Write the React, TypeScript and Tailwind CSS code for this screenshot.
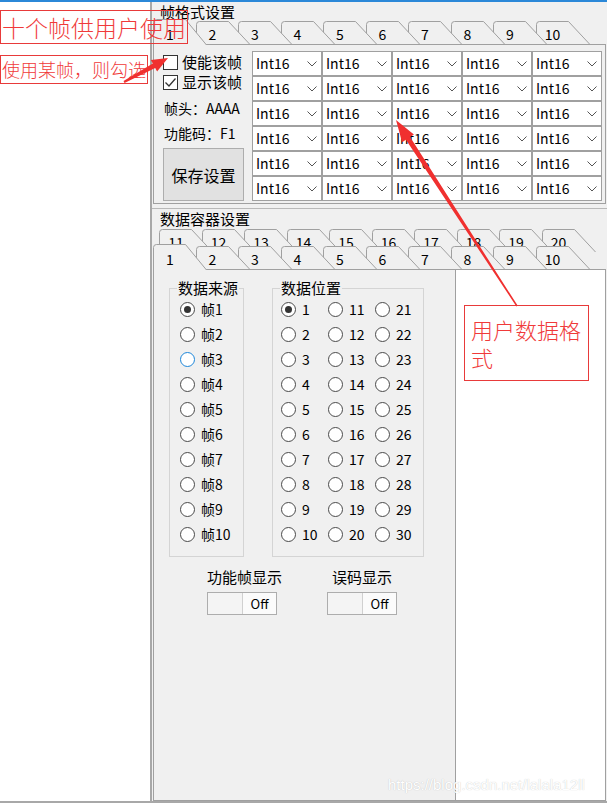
import clsx from 'clsx'

const Z = ['z-[10]', 'z-[9]', 'z-[8]', 'z-[7]', 'z-[6]', 'z-[5]', 'z-[4]', 'z-[3]', 'z-[2]', 'z-[1]']

const front = ['1', '2', '3', '4', '5', '6', '7', '8', '9', '10']
const back = ['11', '12', '13', '14', '15', '16', '17', '18', '19', '20']

function Tab({ label, index, selected }: { label: string; index: number; selected?: boolean }) {
  const h = selected ? 26 : 23
  return (
    <div className={clsx('relative w-[42.5px] shrink-0', selected ? 'h-[26px]' : 'mb-[1px] h-[23px]', Z[index])}>
      <svg className="absolute left-0 top-0 overflow-visible" width="54" height={h}>
        <path d={`M0.5 ${h} V3.5 Q0.5 0.5 3.5 0.5 H32.5 L53.5 ${h}`} fill="#f0f0f0" stroke="#a0a0a0" />
      </svg>
      <span
        className={clsx(
          'absolute left-0 flex w-[34px] justify-center text-[14px] leading-[14px]',
          selected ? 'top-[8px]' : 'top-[6px]'
        )}
      >
        {label}
      </span>
    </div>
  )
}

function Check({ checked }: { checked?: boolean }) {
  return (
    <span className="flex h-[15px] w-[15px] shrink-0 items-center justify-center border border-[#333] bg-white">
      {checked && (
        <svg width="11" height="9">
          <polyline points="0.5,4.5 4,8 10.5,0.5" fill="none" stroke="#333" strokeWidth="1.3" />
        </svg>
      )}
    </span>
  )
}

function Radio({ checked, hover }: { checked?: boolean; hover?: boolean }) {
  return (
    <span
      className={clsx(
        'flex h-[15px] w-[15px] shrink-0 items-center justify-center rounded-full border-[1.5px] bg-white',
        hover ? 'border-[#1c86d9]' : 'border-[#4a4a4a]'
      )}
    >
      {checked && <span className="h-[7px] w-[7px] rounded-full bg-[#333]" />}
    </span>
  )
}

function Toggle() {
  return (
    <div className="flex h-[23px] w-[70px] border border-[#adadad] bg-[#f4f4f4]">
      <div className="flex-1" />
      <div className="flex w-[34px] items-center justify-center border-l border-[#d0d0d0] bg-[#fbfbfb] text-[13px]">
        Off
      </div>
    </div>
  )
}

function arrow(x1: number, y1: number, x2: number, y2: number, head: number, headW: number, tailW: number, neckW: number) {
  const dx = x2 - x1
  const dy = y2 - y1
  const L = Math.hypot(dx, dy)
  const ux = dx / L
  const uy = dy / L
  const px = -uy
  const py = ux
  const nx = x2 - ux * head
  const ny = y2 - uy * head
  const pts = [
    [x1 + (px * tailW) / 2, y1 + (py * tailW) / 2],
    [nx + (px * neckW) / 2, ny + (py * neckW) / 2],
    [nx + (px * headW) / 2, ny + (py * headW) / 2],
    [x2, y2],
    [nx - (px * headW) / 2, ny - (py * headW) / 2],
    [nx - (px * neckW) / 2, ny - (py * neckW) / 2],
    [x1 - (px * tailW) / 2, y1 - (py * tailW) / 2],
  ]
  return pts.map((p) => p.map((v) => v.toFixed(1)).join(',')).join(' ')
}

export default function App() {
  return (
    <div className="relative h-[804px] w-[607px] overflow-hidden bg-white font-['Noto_Sans_CJK_SC','Noto_Sans',sans-serif] text-black">
      <div className="h-[2px] bg-[#2b88d8]" />
      <div className="flex h-[799px]">
        <div className="w-[152px] border-r-2 border-[#a8a8a8] bg-white" />
        <div className="flex flex-1 flex-col bg-[#f0f0f0]">
          {/* 帧格式设置 */}
          <div className="h-[19px] pl-[8px] text-[15px] leading-[19px]">帧格式设置</div>
          <div className="relative z-10 mb-[-1px] flex h-[24px] items-end pl-[1px]">
            {front.map((l, i) => (
              <Tab key={l} label={l} index={i} selected={i === 0} />
            ))}
          </div>
          <div className="mx-[1px] flex h-[160px] border border-[#a0a0a0] pl-[9px] pt-[6px]">
            <div className="w-[89px] text-[15px]">
              <div className="mt-[1px] flex h-[20px] items-center gap-[4px]">
                <Check />
                <span>使能该帧</span>
              </div>
              <div className="flex h-[20px] items-center gap-[4px]">
                <Check checked />
                <span>显示该帧</span>
              </div>
              <div className="mt-[6px] flex h-[20px] items-center pl-[1px] text-[14px]">帧头：AAAA</div>
              <div className="mt-[5px] flex h-[20px] items-center pl-[1px] text-[14px]">功能码：F1</div>
              <button className="mt-[5px] flex h-[53px] w-[81px] items-center justify-center border border-[#adadad] bg-[#e1e1e1] text-[16px]">
                保存设置
              </button>
            </div>
            <div className="grid h-fit grid-cols-[repeat(5,68px)] grid-rows-[repeat(6,23px)] gap-[2px] bg-[#a0a0a0] p-[1px]">
              {Array.from({ length: 30 }).map((_, i) => (
                <div key={i} className="flex items-center justify-between bg-white pl-[3px] pr-[4px] text-[14px]">
                  <span>Int16</span>
                  <svg width="10" height="6">
                    <polyline points="0.5,0.5 5,5 9.5,0.5" fill="none" stroke="#555" />
                  </svg>
                </div>
              ))}
            </div>
          </div>

          {/* 数据容器设置 */}
          <div className="mt-[4px] h-[1px] bg-[#b9b9b9]" />
          <div className="h-[20px] pl-[8px] text-[15px] leading-[20px]">数据容器设置</div>
          <div className="relative z-[5] flex h-[17px] items-start pl-[7px]">
            {back.map((l, i) => (
              <Tab key={l} label={l} index={i} />
            ))}
          </div>
          <div className="relative z-10 mb-[-1px] flex h-[24px] items-end pl-[1px]">
            {front.map((l, i) => (
              <Tab key={l} label={l} index={i} selected={i === 0} />
            ))}
          </div>
          <div className="mx-[1px] flex flex-1 border border-[#a0a0a0]">
            <div className="flex-1 pt-[9px]">
              <div className="flex items-start text-[14px]">
                <fieldset className="ml-[15px] w-[75px] border border-[#d4d4d4] pb-[9px] pl-[10px]">
                  <legend className="ml-[-3px] px-[1px] text-[15px] leading-[18px]">数据来源</legend>
                  {front.map((l, i) => (
                    <div key={l} className="flex h-[25px] items-center gap-[6px]">
                      <Radio checked={i === 0} hover={i === 2} />
                      <span>帧{l}</span>
                    </div>
                  ))}
                </fieldset>
                <fieldset className="ml-[28px] w-[152px] border border-[#d4d4d4] pb-[9px] pl-[8px]">
                  <legend className="ml-[-1px] px-[1px] text-[15px] leading-[18px]">数据位置</legend>
                  <div className="grid grid-flow-col grid-cols-[repeat(3,47px)] grid-rows-[repeat(10,25px)]">
                    {Array.from({ length: 30 }).map((_, i) => (
                      <div key={i} className="flex items-center gap-[6px]">
                        <Radio checked={i === 0} />
                        <span>{i + 1}</span>
                      </div>
                    ))}
                  </div>
                </fieldset>
              </div>
              <div className="mt-[11px] flex text-[15px]">
                <div className="ml-[53px] w-[120px]">
                  <div className="leading-[18px]">功能帧显示</div>
                  <div className="mt-[6px]">
                    <Toggle />
                  </div>
                </div>
                <div>
                  <div className="pl-[5px] leading-[18px]">误码显示</div>
                  <div className="mt-[6px]">
                    <Toggle />
                  </div>
                </div>
              </div>
            </div>
            <div className="w-[150px] border-l border-[#a0a0a0] bg-white" />
          </div>
        </div>
      </div>
      <div className="h-[2px] bg-[#a8a8a8]" />

      {/* annotations */}
      <div className="absolute left-0 top-[10px] z-20 h-[34px] w-[188px] border border-[#e83a3a] pl-[1px] text-[23px] font-light leading-[32px] text-[#f03a3a]">
        十个帧供用户使用
      </div>
      <div className="absolute left-0 top-[55px] z-20 h-[29px] w-[148px] border border-[#e83a3a] pl-[1px] text-[18px] font-light leading-[27px] text-[#f03a3a]">
        使用某帧，则勾选
      </div>
      <div className="absolute left-[464px] top-[305px] z-20 h-[76px] w-[125px] border border-[#e83a3a] bg-white pl-[6px] pt-[9px] text-[22px] font-light leading-[28px] text-[#f03a3a]">
        用户数据格式
      </div>
      <svg className="pointer-events-none absolute left-0 top-0 z-30" width="607" height="804">
        <polygon points={arrow(124, 82, 168, 58, 16, 13, 2, 5)} fill="#f0302f" />
        <polygon points={arrow(517, 306, 396, 120, 22, 14, 1.5, 5)} fill="#f0302f" />
      </svg>
      <div className="absolute left-[388px] top-[774px] z-30 font-['Liberation_Sans',sans-serif] text-[15px] text-white [text-shadow:0_0_1px_rgba(0,0,0,0.25)]">
        https://blog.csdn.net/lalala12ll
      </div>
    </div>
  )
}
